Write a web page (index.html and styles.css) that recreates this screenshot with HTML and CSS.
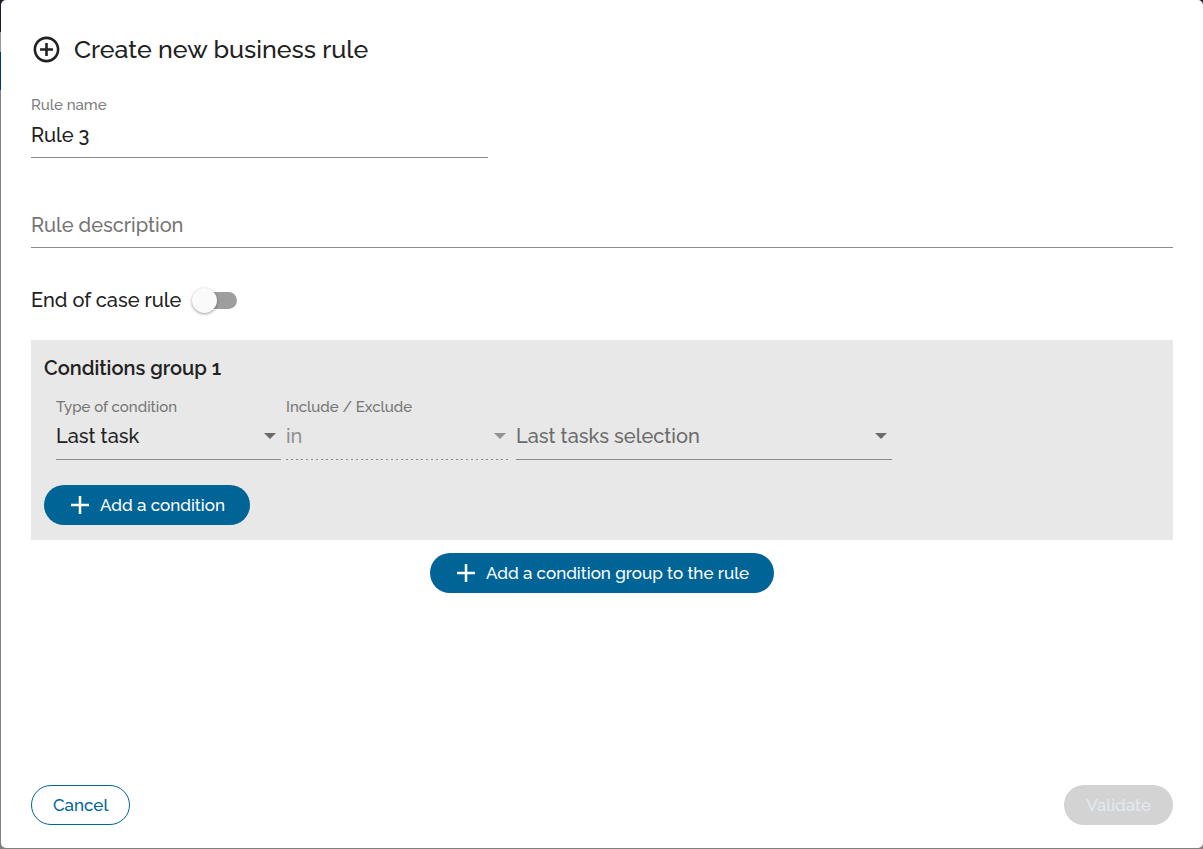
FILE: index.html
```
<!DOCTYPE html>
<html lang="en">
  <head>
    <meta charset="UTF-8" />
    <meta name="viewport" content="width=device-width, initial-scale=1.0" />
    <title>Create new business rule</title>
    <link rel="stylesheet" href="styles.css">
  </head>
  <body>
    <form class="dialog">
      <header class="dialog-header">
        <svg class="title-icon" viewBox="0 0 24 24" aria-hidden="true">
          <path d="M13 7h-2v4H7v2h4v4h2v-4h4v-2h-4V7zm-1-5C6.48 2 2 6.48 2 12s4.48 10 10 10 10-4.48 10-10S17.52 2 12 2zm0 18c-4.41 0-8-3.59-8-8s3.590-8 8-8 8 3.590 8 8-3.590 8-8 8z" />
        </svg>
        <h1>Create new business rule</h1>
      </header>

      <div class="field rule-name">
        <label for="ruleName">Rule name</label>
        <input type="text" id="ruleName" value="Rule 3" />
      </div>

      <div class="field rule-description">
        <input type="text" id="ruleDescription" placeholder="Rule description" aria-label="Rule description" />
      </div>

      <div class="toggle-row">
        <label for="endOfCase">End of case rule</label>
        <input type="checkbox" id="endOfCase" class="toggle" />
      </div>

      <section class="group">
        <h2>Conditions group 1</h2>
        <div class="conditions">
          <div class="field">
            <label for="conditionType">Type of condition</label>
            <div class="select-box">
              <select id="conditionType">
                <option>Last task</option>
              </select>
              <svg class="arrow" viewBox="0 0 12 6" aria-hidden="true"><path d="M0 0h12L6 6z" /></svg>
            </div>
          </div>
          <div class="field disabled">
            <label for="includeExclude">Include / Exclude</label>
            <div class="select-box">
              <select id="includeExclude" disabled>
                <option>in</option>
              </select>
              <svg class="arrow" viewBox="0 0 12 6" aria-hidden="true"><path d="M0 0h12L6 6z" /></svg>
            </div>
          </div>
          <div class="field wide">
            <div class="select-box">
              <select id="lastTasks" class="empty" aria-label="Last tasks selection">
                <option>Last tasks selection</option>
              </select>
              <svg class="arrow" viewBox="0 0 12 6" aria-hidden="true"><path d="M0 0h12L6 6z" /></svg>
            </div>
          </div>
        </div>
        <button type="button" class="btn primary">
          <svg class="plus" viewBox="0 0 18 18" aria-hidden="true"><path d="M9 0v18M0 9h18" /></svg>
          Add a condition
        </button>
      </section>

      <button type="button" class="btn primary add-group">
        <svg class="plus" viewBox="0 0 18 18" aria-hidden="true"><path d="M9 0v18M0 9h18" /></svg>
        Add a condition group to the rule
      </button>

      <footer class="dialog-footer">
        <button type="button" class="btn outline">Cancel</button>
        <button type="submit" class="btn" disabled>Validate</button>
      </footer>
    </form>
  </body>
</html>
```
FILE: styles.css
```
* {
    box-sizing: border-box;
}

/* dimmed page behind the dialog */
body {
    margin: 0;
    padding: 0 0 1px 1px;
    min-height: 100vh;
    display: flex;
    background: linear-gradient(#1b1e29 32px, #979797 32px, #979797 52px, #003b5c 52px, #003b5c 90px, #808080 90px);
    font-family: Raleway, Lato, sans-serif;
    font-size: 20px;
    font-weight: 500;
    color: #212121;
}

.dialog {
    flex: 1;
    display: flex;
    flex-direction: column;
    padding: 30px 30px 23px;
    background: white;
    border-radius: 5px;
}

.dialog-header {
    display: flex;
    align-items: center;
    gap: 12px;
    height: 38px;
    margin-bottom: 28px;
}

.title-icon {
    width: 31px;
    height: 31px;
    fill: #212121;
}

h1 {
    margin: 0;
    font-size: 25px;
    font-weight: 500;
}

.field {
    display: flex;
    flex-direction: column;
}

.field label {
    font-size: 15px;
    line-height: 18px;
    color: #808080;
}

.field input,
.field select {
    width: 100%;
    height: 44px;
    margin: 0;
    padding: 0 0 2px;
    border: none;
    border-bottom: 1px solid #8c8c8c;
    border-radius: 0;
    outline: none;
    background: none;
    appearance: none;
    font: inherit;
    color: #212121;
}

.field input::placeholder {
    color: #757575;
    opacity: 1;
}

.rule-name {
    width: 40%;
}

.rule-description {
    margin-top: 46px;
}

.toggle-row {
    display: flex;
    align-items: center;
    gap: 17px;
    height: 26px;
    margin: 39px 0 27px;
}

.toggle {
    position: relative;
    width: 39px;
    height: 17px;
    margin: 0;
    border-radius: 9px;
    background: #9e9e9e;
    appearance: none;
    cursor: pointer;
}

.toggle::before {
    content: "";
    position: absolute;
    top: -4px;
    left: -6px;
    width: 25px;
    height: 25px;
    border-radius: 50%;
    background: #fafafa;
    box-shadow: 0 1px 3px rgba(0, 0, 0, 0.4);
}

.toggle:checked::before {
    left: 20px;
}

.group {
    padding: 14px 13px 15px;
    background: #e8e8e8;
}

h2 {
    margin: 0 0 16px;
    font-size: 20px;
    font-weight: 600;
    line-height: 28px;
}

.conditions {
    display: flex;
    align-items: flex-end;
    gap: 5px;
    margin: 0 12px 25px;
}

.conditions .field {
    width: 225px;
}

.conditions .wide {
    width: 376px;
}

.conditions .field label {
    color: #757575;
}

.select-box {
    display: grid;
    align-items: center;
}

.select-box select,
.arrow {
    grid-area: 1 / 1;
}

.field select {
    padding-bottom: 4px;
}

.field select.empty {
    color: #6b6b6b;
}

.field select:disabled {
    border-bottom-color: transparent;
    background: repeating-linear-gradient(to right, #8c8c8c 0 2px, transparent 2px 5px) bottom / 100% 1px no-repeat border-box;
    color: #919191;
    opacity: 1;
}

.arrow {
    justify-self: end;
    width: 12px;
    height: 6px;
    margin: 0 5px 4px 0;
    fill: #6b6b6b;
    pointer-events: none;
}

.disabled .arrow {
    fill: #919191;
}

.btn {
    display: flex;
    align-items: center;
    height: 40px;
    padding: 0 21px;
    border: 1px solid transparent;
    border-radius: 20px;
    font-family: inherit;
    font-size: 17px;
    font-weight: 500;
    cursor: pointer;
}

.primary {
    gap: 11px;
    padding: 0 24px 0 26px;
    background: #006496;
    color: white;
}

.outline {
    border-color: #006496;
    background: white;
    color: #006496;
}

.btn:disabled {
    background: #d3d3d3;
    color: #e3e9ef;
    cursor: default;
}

.plus {
    width: 18px;
    height: 18px;
    fill: none;
    stroke: white;
    stroke-width: 2.5;
}

.add-group {
    align-self: center;
    margin-top: 13px;
}

.dialog-footer {
    display: flex;
    justify-content: space-between;
    margin-top: auto;
}
```
